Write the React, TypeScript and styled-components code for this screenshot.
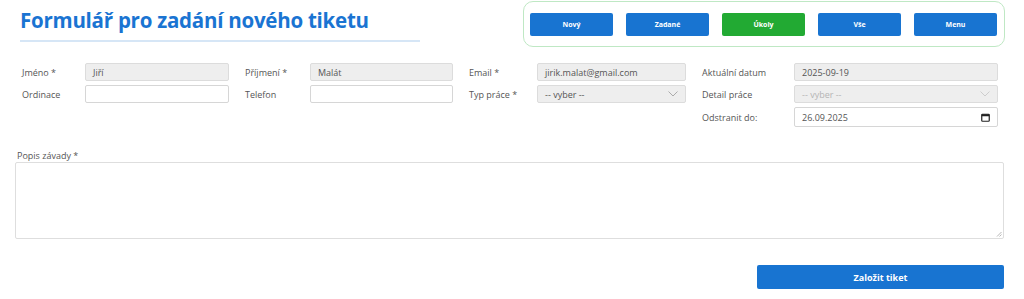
import React from "react";
import styled, { createGlobalStyle } from "styled-components";

const Global = createGlobalStyle`
  html, body { margin: 0; padding: 0; background: #fff; }
  body { font-family: "Open Sans", "Noto Sans", Arial, sans-serif; color: #444; }
  * { box-sizing: border-box; }
`;

const Page = styled.div`
  width: 1024px;
  height: 299px;
  overflow: hidden;
  position: relative;
`;

const Header = styled.div`
  display: flex;
  justify-content: space-between;
  align-items: flex-start;
  padding: 1px 19px 0 20px;
  height: 54px;
`;

const TitleBlock = styled.div`
  width: 400px;
  padding-top: 5px;
`;

const Title = styled.h1`
  margin: 0;
  font-size: 20.5px;
  font-weight: 700;
  letter-spacing: -0.25px;
  color: #1a74d2;
  line-height: 28px;
  white-space: nowrap;
`;

const Underline = styled.div`
  margin-top: 6px;
  height: 2px;
  background: #d6e6f6;
`;

const Nav = styled.nav`
  display: flex;
  gap: 13px;
  padding: 11px 6px 10px 6px;
  border: 1px solid #bfe8c4;
  border-radius: 10px;
  width: 482px;
`;

const NavButton = styled.button<{ $green?: boolean }>`
  width: 83px;
  height: 23px;
  border: none;
  border-radius: 2px;
  background: ${(p) => (p.$green ? "#22aa33" : "#1874d1")};
  color: #fff;
  font-family: inherit;
  font-size: 7px;
  font-weight: 700;
  padding: 0;
`;

const FormGrid = styled.div`
  display: grid;
  grid-template-columns: 63px 144px 81px 143px 84px 149px 108px 204px;
  row-gap: 4px;
  padding: 9px 0 0 22px;
`;

const Label = styled.label<{ $indent?: boolean }>`
  font-size: 9px;
  color: #555;
  display: flex;
  align-items: center;
  white-space: nowrap;
  padding-left: ${(p) => (p.$indent ? "16px" : "0")};
`;

const Empty = styled.div``;

const Field = styled.div<{ $disabled?: boolean; $tall?: boolean }>`
  height: ${(p) => (p.$tall ? "20px" : "18px")};
  border: 1px solid ${(p) => (p.$disabled ? "#dcdcdc" : "#d6d6d6")};
  background: ${(p) => (p.$disabled ? "#eeeeee" : "#fff")};
  border-radius: 2px;
  display: flex;
  align-items: center;
  justify-content: space-between;
  padding: 0 7px 0 7px;
  font-size: 9px;
  color: ${(p) => (p.$disabled ? "#888" : "#444")};
`;

const Muted = styled.span<{ $faint?: boolean }>`
  color: ${(p) => (p.$faint ? "#b5b5b5" : "#555")};
`;

const Chevron = ({ color }: { color: string }) => (
  <svg width="10" height="6" viewBox="0 0 10 6">
    <path d="M0.5 0.5 L5 5 L9.5 0.5" fill="none" stroke={color} strokeWidth="0.8" />
  </svg>
);

const CalendarIcon = () => (
  <svg width="9" height="9" viewBox="0 0 9 9">
    <rect x="0.75" y="1.25" width="7.5" height="7" rx="0.8" fill="none" stroke="#222" strokeWidth="1.2" />
    <rect x="0.75" y="1.25" width="7.5" height="2" fill="#222" />
  </svg>
);

const DescSection = styled.div`
  padding: 24px 20px 0 15px;
`;

const DescLabel = styled.div`
  font-size: 9px;
  color: #555;
  padding-left: 2px;
  line-height: 10px;
  height: 11px;
`;

const TextArea = styled.div`
  position: relative;
  height: 77px;
  border: 1px solid #dedede;
  border-radius: 2px;
`;

const Grip = styled.svg`
  position: absolute;
  right: 1px;
  bottom: 1px;
`;

const Footer = styled.div`
  display: flex;
  justify-content: flex-end;
  padding: 26px 20px 0 0;
`;

const Submit = styled.button`
  width: 247px;
  height: 24px;
  border: none;
  border-radius: 2px;
  background: #1874d1;
  color: #fff;
  font-family: inherit;
  font-size: 9px;
  font-weight: 700;
`;

export default function App() {
  return (
    <Page>
      <Global />
      <Header>
        <TitleBlock>
          <Title>Formulář pro zadání nového tiketu</Title>
          <Underline />
        </TitleBlock>
        <Nav>
          <NavButton>Nový</NavButton>
          <NavButton>Zadané</NavButton>
          <NavButton $green>Úkoly</NavButton>
          <NavButton>Vše</NavButton>
          <NavButton>Menu</NavButton>
        </Nav>
      </Header>
      <FormGrid>
        <Label>Jméno *</Label>
        <Field $disabled><Muted>Jiří</Muted></Field>
        <Label $indent>Příjmení *</Label>
        <Field $disabled><Muted>Malát</Muted></Field>
        <Label $indent>Email *</Label>
        <Field $disabled><Muted>jirik.malat@gmail.com</Muted></Field>
        <Label $indent>Aktuální datum</Label>
        <Field $disabled><Muted>2025-09-19</Muted></Field>

        <Label>Ordinace</Label>
        <Field />
        <Label $indent>Telefon</Label>
        <Field />
        <Label $indent>Typ práce *</Label>
        <Field $disabled><Muted>-- vyber --</Muted><Chevron color="#999" /></Field>
        <Label $indent>Detail práce</Label>
        <Field $disabled><Muted $faint>-- vyber --</Muted><Chevron color="#c4c4c4" /></Field>

        <Empty />
        <Empty />
        <Empty />
        <Empty />
        <Empty />
        <Empty />
        <Label $indent>Odstranit do:</Label>
        <Field $tall><Muted>26.09.2025</Muted><CalendarIcon /></Field>
      </FormGrid>
      <DescSection>
        <DescLabel>Popis závady *</DescLabel>
        <TextArea>
          <Grip width="6" height="6" viewBox="0 0 6 6">
            <path d="M5.5 1 L1 5.5 M5.5 3.5 L3.5 5.5" stroke="#999" strokeWidth="0.7" />
          </Grip>
        </TextArea>
      </DescSection>
      <Footer>
        <Submit>Založit tiket</Submit>
      </Footer>
    </Page>
  );
}
